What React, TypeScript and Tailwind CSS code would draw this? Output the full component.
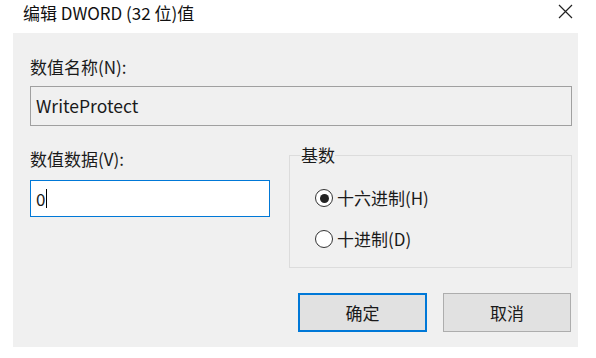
import React from "react";

const font = { fontFamily: '"Noto Sans CJK SC", "Noto Sans", sans-serif' };

const Radio: React.FC<{ checked?: boolean; label: string }> = ({ checked, label }) => {
    return (
        <div className="flex items-center h-[22px]">
            <span className="w-[18px] h-[18px] rounded-full border-[1.5px] border-[#333] bg-white flex items-center justify-center">
                {checked ? <span className="w-[9px] h-[9px] rounded-full bg-[#222]" /> : ""}
            </span>
            <span className="ml-[4px] text-[17px] text-[#1a1a1a]">{label}</span>
        </div>
    )
}

const App: React.FC = () => {
    return (
        <div className="w-[596px] h-[358px] bg-white overflow-hidden" style={font}>
            {/* title bar */}
            <div className="h-[33px] flex items-center justify-between pl-[23px] pr-[23px]">
                <span className="text-[17px] text-[#111] leading-none -mt-[8px]">编辑 DWORD (32 位)值</span>
                <svg width="15" height="15" viewBox="0 0 15 15" className="-mt-[10px]">
                    <path d="M1 1 L14 14 M14 1 L1 14" stroke="#222" strokeWidth="1.2" />
                </svg>
            </div>

            <div className="ml-[13px] w-[565px] h-[314px] bg-[#f0f0f0] pl-[17px] pr-[6px] pt-[23px]">
                <div className="text-[17px] leading-[22px] text-[#1a1a1a]">数值名称(N):</div>
                <div className="mt-[8px] h-[40px] border border-[#a0a0a0] bg-[#f0f0f0] flex items-center pl-[5px] text-[17.5px] text-[#1a1a1a]">
                    WriteProtect
                </div>

                <div className="flex mt-[22px]">
                    <div className="w-[240px]">
                        <div className="text-[17px] leading-[22px] text-[#1a1a1a]">数值数据(V):</div>
                        <div className="mt-[10px] h-[37px] border border-[#0078d7] bg-white flex items-center pl-[5px] text-[17px] text-[#1a1a1a]">
                            0<span className="w-px h-[19px] bg-black ml-[1px]" />
                        </div>
                    </div>
                    <fieldset className="ml-[19px] w-[283px] h-[124px] border border-[#dcdcdc] pl-[25px] pt-[21px] -mt-[4px]">
                        <legend className="text-[17px] leading-[22px] text-[#1a1a1a] -ml-[14px] px-0">基数</legend>
                        <div className="flex flex-col gap-[19px]">
                            <Radio checked label="十六进制(H)" />
                            <Radio label="十进制(D)" />
                        </div>
                    </fieldset>
                </div>

                <div className="flex mt-[25px] ml-[268px] gap-[16px]">
                    <button className="w-[129px] h-[39px] border-2 border-[#0078d7] bg-[#e1e1e1] text-[17px] text-[#1a1a1a]">确定</button>
                    <button className="w-[128px] h-[39px] border border-[#adadad] bg-[#e1e1e1] text-[17px] text-[#1a1a1a]">取消</button>
                </div>
            </div>
        </div>
    )
}

export default App
